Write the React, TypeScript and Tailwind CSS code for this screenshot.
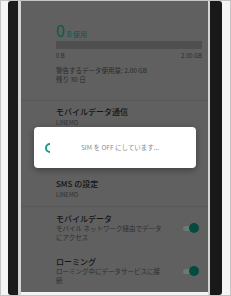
import React from 'react';

const font = { fontFamily: '"Noto Sans CJK JP", "Noto Sans", sans-serif' };

function Toggle() {
  return (
    <div className="relative w-[16px] h-[10px]">
      <div className="absolute left-0 top-[2.5px] w-[14px] h-[5px] rounded-full bg-[#6a7a77]" />
      <div className="absolute right-0 top-0 w-[10px] h-[10px] rounded-full bg-[#054a3f]" />
    </div>
  );
}

function Spinner() {
  return (
    <svg width="10" height="10" viewBox="0 0 10 10">
      <path d="M5 1 A4 4 0 0 0 5 9" fill="none" stroke="#1f9a87" strokeWidth="2" strokeLinecap="butt" />
    </svg>
  );
}

export default function App() {
  return (
    <div className="w-[231px] h-[296px] overflow-hidden bg-[#f3f3f3] border border-[#c4c4c4] flex" style={font}>
      <div className="w-[7px] bg-[#f5f5f5]" />
      <div className="w-[10px] bg-[#1b1b1b] rounded-l-[3px]" />
      <div className="w-[3px] bg-[#d4d4d4]" />

      {/* screen */}
      <div className="relative w-[187px] h-[291px] bg-[#606060] overflow-hidden">
        <div className="flex flex-col pl-[35px] pr-[6px]">
          <div className="mt-[21px] h-[16px] flex items-baseline text-[#0a5a4b]">
            <span className="text-[16px] leading-[16px]">0</span>
            <span className="ml-[2px] text-[7px] leading-[16px]">B 使用</span>
          </div>
          <div className="mt-[3px] h-[8px] bg-[#4f4f4f]" />
          <div className="mt-[2px] h-[10px] flex justify-between text-[6px] leading-[10px] text-[#2c2c2c]">
            <span>0 B</span>
            <span>2.00 GB</span>
          </div>
          <div className="mt-[5px] h-[9px] text-[6.5px] leading-[9px] text-[#2a2a2a]">警告するデータ使用量: 2.00 GB</div>
          <div className="h-[9px] text-[6.5px] leading-[9px] text-[#2a2a2a]">残り 30 日</div>
        </div>

        <div className="mt-[16px] h-[1px] bg-[#585858]" />

        <div className="flex flex-col pl-[35px] pr-[6px]">
          <div className="mt-[6px] h-[10px] text-[8px] leading-[10px] font-medium text-[#141414]">モバイルデータ通信</div>
          <div className="mt-[1px] h-[9px] text-[6px] leading-[9px] text-[#303030]">LINEMO</div>

          <div className="mt-[52px] h-[10px] text-[8px] leading-[10px] font-medium text-[#141414]">SMS の設定</div>
          <div className="mt-[1px] h-[9px] text-[6px] leading-[9px] text-[#303030]">LINEMO</div>
        </div>

        <div className="mt-[7px] h-[1px] bg-[#585858]" />

        <div className="flex flex-col pl-[35px] pr-[9px]">
          <div className="mt-[7px] flex items-center justify-between">
            <div className="flex flex-col">
              <div className="h-[10px] text-[8px] leading-[10px] font-medium text-[#141414]">モバイルデータ</div>
              <div className="h-[9px] text-[6.5px] leading-[9px] text-[#2e2e2e]">モバイル ネットワーク経由でデータ</div>
              <div className="h-[9px] text-[6.5px] leading-[9px] text-[#2e2e2e]">にアクセス</div>
            </div>
            <Toggle />
          </div>

          <div className="mt-[15px] flex items-center justify-between">
            <div className="flex flex-col">
              <div className="h-[10px] text-[8px] leading-[10px] font-medium text-[#141414]">ローミング</div>
              <div className="h-[9px] text-[6.5px] leading-[9px] text-[#2e2e2e]">ローミング中にデータサービスに接</div>
              <div className="h-[9px] text-[6.5px] leading-[9px] text-[#2e2e2e]">続</div>
            </div>
            <Toggle />
          </div>
        </div>

        {/* progress dialog */}
        <div className="absolute left-[13px] top-[126px] w-[162px] h-[41px] bg-white rounded-[4px] shadow-[0_2px_6px_rgba(0,0,0,0.35)] flex items-center pl-[11px]">
          <Spinner />
          <span className="ml-[26px] text-[6.5px] leading-[9px] text-[#8a8a8a]">SIM を OFF にしています...</span>
        </div>
      </div>

      <div className="w-[2px] bg-[#d4d4d4]" />
      <div className="w-[12px] bg-[#191919] rounded-r-[3px]" />
      <div className="flex-1 bg-[#f5f5f5]" />
    </div>
  );
}
